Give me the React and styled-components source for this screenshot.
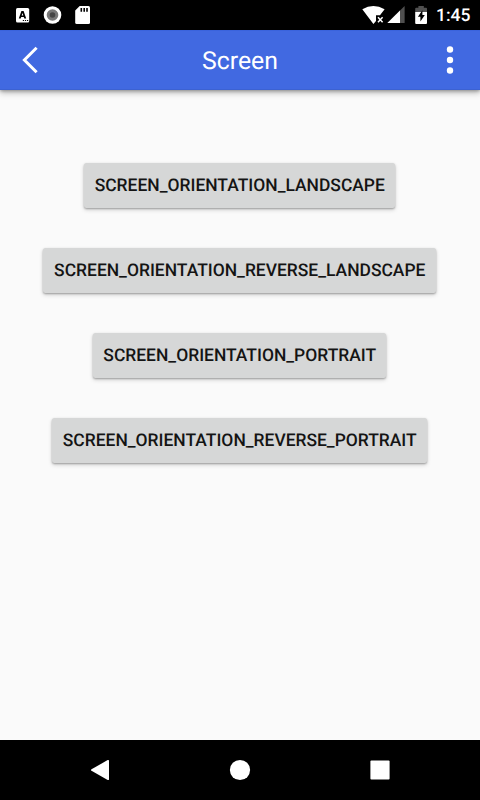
import React from 'react';
import styled, { createGlobalStyle } from 'styled-components';

const GlobalStyle = createGlobalStyle`
  * { box-sizing: border-box; }
  body {
    margin: 0;
    background: #fafafa;
    font-family: Roboto, sans-serif;
    text-rendering: geometricPrecision;
  }
`;

const Screen = styled.div`
  display: flex;
  flex-direction: column;
  width: 480px;
  height: 800px;
  overflow: hidden;
  background: #fafafa;
`;

const StatusBar = styled.div`
  display: flex;
  flex: none;
  justify-content: space-between;
  height: 30px;
  background: #000;
`;

const StatusIcons = styled.svg`
  display: block;
  width: ${(p) => p.$width}px;
  height: 30px;
`;

const StatusEnd = styled.div`
  display: flex;
  align-items: center;
  padding-right: 9px;
`;

const Clock = styled.span`
  width: 35px;
  height: 30px;
  color: #fff;
  font-size: 17.5px;
  font-weight: 500;
  line-height: 33px;
  white-space: nowrap;
`;

const AppBar = styled.header`
  display: grid;
  flex: none;
  grid-template-columns: 60px 1fr 60px;
  align-items: center;
  height: 60px;
  background: #4169e1;
  border-top: 1px solid #3a63dc;
  border-bottom: 1px solid #3c62d2;
  box-shadow: 0 1px 3px rgba(0, 0, 0, 0.28), 0 3px 6px rgba(0, 0, 0, 0.25);
`;

const Title = styled.h1`
  margin: 0;
  padding-top: 3px;
  color: #fff;
  font-size: 24.8px;
  font-weight: 400;
  line-height: 30px;
  text-align: center;
`;

const BarButton = styled.button`
  display: block;
  width: 60px;
  height: 58px;
  padding: 0;
  border: 0;
  background: transparent;

  svg { display: block; }
`;

const Content = styled.main`
  display: flex;
  flex: 1;
  flex-direction: column;
  align-items: center;
  gap: 40px;
  padding: 72.5px 0.5px 0 0;
`;

const OrientationButton = styled.button`
  flex: none;
  width: ${(p) => p.$width}px;
  height: 45px;
  padding: 1px 0 0;
  border: 0;
  border-radius: 2.5px;
  background: #d6d7d7;
  box-shadow: 0 1px 2px rgba(0, 0, 0, 0.28), 0 2px 4px rgba(0, 0, 0, 0.16);
  color: #141414;
  font-family: Roboto, sans-serif;
  font-size: 17.46px;
  font-weight: 500;
  line-height: 45px;
  text-rendering: geometricPrecision;
  white-space: nowrap;
`;

const NavBar = styled.nav`
  display: flex;
  flex: none;
  justify-content: center;
  gap: 80px;
  height: 60px;
  background: #000;
`;

const NavIcon = styled.svg`
  display: block;
  width: 60px;
  height: 60px;
  fill: #fff;
`;

const buttons = [
  { label: 'SCREEN_ORIENTATION_LANDSCAPE', width: 311 },
  { label: 'SCREEN_ORIENTATION_REVERSE_LANDSCAPE', width: 393 },
  { label: 'SCREEN_ORIENTATION_PORTRAIT', width: 293 },
  { label: 'SCREEN_ORIENTATION_REVERSE_PORTRAIT', width: 375 },
];

function Notifications() {
  return (
    <StatusIcons $width={100} viewBox="0 0 100 30">
      <rect x="16" y="8" width="13.2" height="14.5" rx="1.5" fill="#fff" />
      <path
        fillRule="evenodd"
        d="M18.8 18.5 21.4 11H23.6L26.2 18.5H24.3L23.8 16.9H21.2L20.7 18.5ZM21.7 15.4H23.3L22.5 12.9Z"
        fill="#000"
      />
      <path d="M22.8 20.5h1.2M24.9 20.5h1.2M27 20.5h1.2" stroke="#000" strokeWidth="1.1" />
      <circle cx="52.5" cy="15" r="8.8" fill="#fff" />
      <circle cx="52.5" cy="15" r="5.8" fill="#777" />
      <circle cx="52.5" cy="15" r="2.8" fill="#444" />
      <path d="M79.7 6H88.5Q90 6 90 7.5V22.4Q90 24 88.5 24H76.7Q75.2 24 75.2 22.4V10.5Z" fill="#fff" />
      <path d="M81.3 8v3.8M84.2 8v3.8M87 8v3.8" stroke="#000" strokeWidth="1.6" />
    </StatusIcons>
  );
}

function Connectivity() {
  return (
    <StatusIcons $width={76} viewBox="360 0 76 30">
      <path d="M362.3 9.2Q373.4 2.6 384.6 9.2L380 15.2H376V21L373.4 24Z" fill="#fff" />
      <path d="M378 17.3 382.6 22.2M382.6 17.3 378 22.2" stroke="#fff" strokeWidth="1.5" />
      <path d="M404.6 6V23H387.4Z" fill="#505050" />
      <path d="M400 10.4V23H387.4Z" fill="#fff" />
      <path d="M415.2 12V8.8Q415.2 7.8 416.2 7.8H418.4V6H423.8V7.8H426Q427 7.8 427 8.8V12Z" fill="#505050" />
      <path d="M415.2 12H427V23Q427 24 426 24H416.2Q415.2 24 415.2 23Z" fill="#fff" />
      <path d="M422.4 10.2 417.9 16.7H420.4V21.6L424.8 14.9H422.4Z" fill="#000" />
    </StatusIcons>
  );
}

export default function App() {
  return (
    <>
      <GlobalStyle />
      <Screen>
        <StatusBar>
          <Notifications />
          <StatusEnd>
            <Connectivity />
            <Clock>1:45</Clock>
          </StatusEnd>
        </StatusBar>
        <AppBar>
          <BarButton aria-label="Back">
            <svg width="60" height="58" viewBox="0 1 60 58">
              <path d="M36.6 17.8 24.4 30 36.6 42.2" fill="none" stroke="#fff" strokeWidth="3" />
            </svg>
          </BarButton>
          <Title>Screen</Title>
          <BarButton aria-label="More options">
            <svg width="60" height="58" viewBox="0 1 60 58" fill="#fff">
              <circle cx="30" cy="19.5" r="3.2" />
              <circle cx="30" cy="30" r="3.2" />
              <circle cx="30" cy="40.5" r="3.2" />
            </svg>
          </BarButton>
        </AppBar>
        <Content>
          {buttons.map((b) => (
            <OrientationButton key={b.label} $width={b.width}>{b.label}</OrientationButton>
          ))}
        </Content>
        <NavBar>
          <NavIcon viewBox="0 0 60 60">
            <path d="M21.5 29.2 37.7 20.1Q39 19.5 39 20.8V39.2Q39 40.5 37.7 39.9L21.5 30.8Q20.4 30 21.5 29.2Z" />
          </NavIcon>
          <NavIcon viewBox="0 0 60 60">
            <circle cx="30" cy="30" r="10.1" />
          </NavIcon>
          <NavIcon viewBox="0 0 60 60">
            <rect x="20.4" y="20.4" width="19.2" height="19.2" rx="1" />
          </NavIcon>
        </NavBar>
      </Screen>
    </>
  );
}
